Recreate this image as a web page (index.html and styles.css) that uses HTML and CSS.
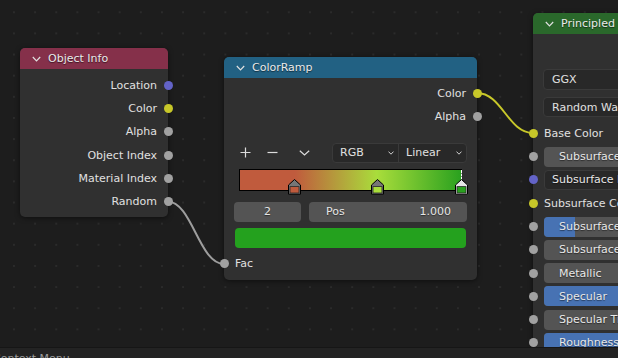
FILE: index.html
```html
<!DOCTYPE html>
<html>
<head>
<meta charset="utf-8">
<link rel="stylesheet" href="styles.css">
</head>
<body>
<div class="editor">
  <svg class="links" width="618" height="347" viewBox="0 0 618 347">
    <path d="M167.5 201.5 C192 201.5 199 264 224 264" fill="none" stroke="#9d9d9d" stroke-width="2"/>
    <path d="M477 93 C502 93 508 133 533 133" fill="none" stroke="#c8c82a" stroke-width="2"/>
  </svg>

  <div class="node obj">
    <div class="head h-red">
      <svg class="chev" width="9" height="6" viewBox="0 0 9 6"><path d="M0.8 1 L4.5 4.8 L8.2 1" fill="none" stroke="#e0e0e0" stroke-width="1.2"/></svg>
      <span>Object Info</span>
    </div>
    <div class="obj-body">
      <div class="row out"><span>Location</span><i class="sock blue"></i></div>
      <div class="row out"><span>Color</span><i class="sock yellow"></i></div>
      <div class="row out"><span>Alpha</span><i class="sock gray"></i></div>
      <div class="row out"><span>Object Index</span><i class="sock gray"></i></div>
      <div class="row out"><span>Material Index</span><i class="sock gray"></i></div>
      <div class="row out"><span>Random</span><i class="sock gray"></i></div>
    </div>
  </div>

  <div class="node ramp">
    <div class="head h-blue">
      <svg class="chev" width="9" height="6" viewBox="0 0 9 6"><path d="M0.8 1 L4.5 4.8 L8.2 1" fill="none" stroke="#e0e0e0" stroke-width="1.2"/></svg>
      <span>ColorRamp</span>
    </div>
    <div class="ramp-body">
      <div class="row out"><span>Color</span><i class="sock yellow"></i></div>
      <div class="row out"><span>Alpha</span><i class="sock gray"></i></div>
      <div class="tools">
        <div class="tbtn"><svg width="11" height="11" viewBox="0 0 11 11"><path d="M5.5 0.5 V10.5 M0.5 5.5 H10.5" stroke="#dcdcdc" stroke-width="1.2"/></svg></div>
        <div class="tbtn t2"><svg width="11" height="11" viewBox="0 0 11 11"><path d="M0.5 5.5 H10.5" stroke="#dcdcdc" stroke-width="1.2"/></svg></div>
        <div class="tbtn t3"><svg width="11" height="6" viewBox="0 0 11 6"><path d="M0.8 0.8 L5.5 5 L10.2 0.8" fill="none" stroke="#dcdcdc" stroke-width="1.2"/></svg></div>
        <div class="dd">
          <div class="dd-seg s1"><span>RGB</span><svg width="6" height="4" viewBox="0 0 6 4"><path d="M0.5 0.6 L3 3.2 L5.5 0.6" fill="none" stroke="#d0d0d0" stroke-width="1"/></svg></div>
          <div class="dd-seg s2"><span>Linear</span><svg width="6" height="4" viewBox="0 0 6 4"><path d="M0.5 0.6 L3 3.2 L5.5 0.6" fill="none" stroke="#d0d0d0" stroke-width="1"/></svg></div>
        </div>
      </div>
      <div class="bar">
        <div class="grad"></div>
        <div class="active-line"></div>
        <svg class="mk m1" width="13" height="16" viewBox="0 0 13 16"><path d="M6.5 0.5 L12.5 6 V15.2 H0.5 V6 Z" fill="#767676" stroke="#000"/><rect x="2" y="7.6" width="9" height="6.4" fill="#c05b3d" stroke="#2a2a2a" stroke-width="0.8"/></svg>
        <svg class="mk m2" width="13" height="16" viewBox="0 0 13 16"><path d="M6.5 0.5 L12.5 6 V15.2 H0.5 V6 Z" fill="#767676" stroke="#000"/><rect x="2" y="7.6" width="9" height="6.4" fill="#a9dd3b" stroke="#2a2a2a" stroke-width="0.8"/></svg>
        <svg class="mk m3" width="13" height="16" viewBox="0 0 13 16"><path d="M6.5 0.5 L12.5 6 V15.2 H0.5 V6 Z" fill="#e6e6e6" stroke="#000"/><rect x="2" y="7.6" width="9" height="6.4" fill="#2aa11f" stroke="#2a2a2a" stroke-width="0.8"/></svg>
      </div>
      <div class="fields">
        <div class="num n1"><span>2</span></div>
        <div class="num n2"><span>Pos</span><span>1.000</span></div>
      </div>
      <div class="swatch"></div>
      <div class="row in fac"><i class="sock gray"></i><span>Fac</span></div>
    </div>
  </div>

  <div class="node bsdf">
    <div class="head h-green">
      <svg class="chev" width="9" height="6" viewBox="0 0 9 6"><path d="M0.8 1 L4.5 4.8 L8.2 1" fill="none" stroke="#e0e0e0" stroke-width="1.2"/></svg>
      <span>Principled BSDF</span>
    </div>
    <div class="bsdf-body">
      <div class="dd-full first"><span>GGX</span></div>
      <div class="dd-full second"><span>Random Walk</span></div>
      <div class="row in first-row"><i class="sock yellow"></i><span>Base Color</span></div>
      <div class="row in"><i class="sock gray"></i><div class="slider"><span>Subsurface</span></div></div>
      <div class="row in"><i class="sock blue"></i><div class="vec"><span>Subsurface Radius</span></div></div>
      <div class="row in"><i class="sock yellow"></i><span>Subsurface Color</span></div>
      <div class="row in"><i class="sock gray"></i><div class="slider"><b class="fill" style="width:14%"></b><span>Subsurface IOR</span></div></div>
      <div class="row in"><i class="sock gray"></i><div class="slider"><span>Subsurface Anisotropy</span></div></div>
      <div class="row in"><i class="sock gray"></i><div class="slider"><span>Metallic</span></div></div>
      <div class="row in"><i class="sock gray"></i><div class="slider"><b class="fill" style="width:50%"></b><span>Specular</span></div></div>
      <div class="row in"><i class="sock gray"></i><div class="slider"><span>Specular Tint</span></div></div>
      <div class="row in"><i class="sock gray"></i><div class="slider"><b class="fill" style="width:50%"></b><span>Roughness</span></div></div>
    </div>
  </div>
</div>
<div class="status"><span>Context Menu</span></div>
</body>
</html>
```

FILE: styles.css
```css
* { box-sizing: border-box; }
html, body { margin: 0; padding: 0; }
body {
  width: 618px;
  height: 358px;
  overflow: hidden;
  background: #1d1d1d;
  font-family: "DejaVu Sans", "Liberation Sans", sans-serif;
  font-size: 11px;
  color: #e0e0e0;
}
.editor {
  position: relative;
  height: 347px;
  overflow: hidden;
  background-color: #1d1d1d;
  background-image: radial-gradient(circle, #2b2b2b 0.9px, transparent 1.4px);
  background-size: 21.15px 21.15px;
  background-position: 3.4px 1.7px;
}
.status {
  height: 11px;
  border-top: 1px solid #161616;
  background: #232323;
  overflow: hidden;
  color: #9c9c9c;
  line-height: 13px;
  padding-top: 4px;
}
.status span { margin-left: -7px; }

.links { position: absolute; left: 0; top: 0; }

.node {
  position: absolute;
  background: #303030;
  border-radius: 5px;
  box-shadow: 0 1px 5px rgba(0, 0, 0, 0.5);
}
.head {
  height: 21px;
  border-radius: 5px 5px 0 0;
  display: flex;
  align-items: center;
  padding-left: 12px;
  gap: 7px;
  color: #eaeaea;
  text-shadow: 0 1px 1px rgba(0, 0, 0, 0.55);
}
.chev { flex: none; }
.h-red { background: #85304a; }
.h-blue { background: #226183; }
.h-green { background: #2a682b; }

.row {
  position: relative;
  height: 23.3px;
  display: flex;
  align-items: center;
  white-space: nowrap;
}
.row.out { justify-content: flex-end; padding-right: 11px; }
.row.in { padding-left: 11px; }
.sock {
  position: absolute;
  top: 50%;
  width: 9px;
  height: 9px;
  margin-top: -4.5px;
  border-radius: 50%;
}
.out .sock { right: -4.5px; }
.in .sock { left: -4.5px; }
.sock.gray { background: #a1a1a1; }
.sock.yellow { background: #c7c729; }
.sock.blue { background: #6363c7; }

/* Object Info */
.obj { left: 20px; top: 48px; width: 148px; height: 169px; }
.obj-body { padding-top: 4.5px; }

/* ColorRamp */
.ramp { left: 224px; top: 57px; width: 253px; height: 223px; }
.ramp-body { padding-top: 4px; }
.tools {
  display: flex;
  align-items: center;
  height: 20px;
  margin: 14.4px 10px 0 11px;
}
.tbtn {
  width: 20px;
  height: 20px;
  display: flex;
  align-items: center;
  justify-content: center;
}
.tbtn.t2 { margin-left: 7px; }
.tbtn.t3 { margin-left: 12px; }
.dd {
  margin-left: auto;
  width: 135px;
  height: 20px;
  display: flex;
  background: #282828;
  border: 1px solid #3a3a3a;
  border-radius: 4px;
}
.dd-seg {
  display: flex;
  align-items: center;
  justify-content: space-between;
  padding: 0 4px 0 7px;
}
.dd-seg.s1 { width: 66px; border-right: 1px solid #3a3a3a; }
.dd-seg.s2 { flex: 1; padding-left: 7px; padding-right: 4px; }

.bar {
  position: relative;
  height: 22px;
  margin: 6px 15px 0 15px;
}
.grad {
  height: 22px;
  border: 1px solid #000;
  background: linear-gradient(to right, #c05b3d 0%, #c05b3d 24.9%, #a9dd3b 61.9%, #2aa11f 100%);
}
.active-line {
  position: absolute;
  left: 221.5px;
  top: 1px;
  height: 10px;
  border-left: 1px dashed #ffffff;
}
.mk { position: absolute; top: 10px; }
.mk.m1 { left: 49px; }
.mk.m2 { left: 131.5px; }
.mk.m3 { left: 215.7px; }

.fields {
  display: flex;
  gap: 8px;
  height: 20px;
  margin: 11px 10px 0 10px;
}
.num {
  height: 20px;
  background: #545454;
  border-radius: 4px;
  display: flex;
  align-items: center;
  color: #e6e6e6;
  text-shadow: 0 1px 1px rgba(0, 0, 0, 0.45);
}
.num.n1 { width: 67px; justify-content: center; }
.num.n2 { flex: 1; justify-content: space-between; padding: 0 16px 0 17px; }
.swatch {
  height: 20px;
  margin: 6px 11px 0 11px;
  background: #24a11e;
  border-radius: 4px;
}
.row.fac { margin-top: 4.35px; }

/* Principled */
.bsdf { left: 533px; top: 13px; width: 240px; height: 360px; }
.bsdf-body { padding-top: 35.3px; }
.dd-full {
  margin: 0 10px 0 10px;
  background: #282828;
  border: 1px solid #3a3a3a;
  border-radius: 4px;
  display: flex;
  align-items: center;
  padding-left: 8px;
  white-space: nowrap;
}
.dd-full.first { height: 20.7px; }
.dd-full.second { height: 20px; margin-top: 7.3px; }
.row.first-row { margin-top: 4.4px; }
.slider, .vec {
  position: relative;
  flex: 1;
  height: 20px;
  margin-right: 10px;
  border-radius: 4px;
  display: flex;
  align-items: center;
  overflow: hidden;
  white-space: nowrap;
  color: #e8e8e8;
  text-shadow: 0 1px 1px rgba(0, 0, 0, 0.5);
}
.slider { background: #545454; padding-left: 15px; }
.vec { background: #282828; border: 1px solid #3a3a3a; padding-left: 7px; }
.fill {
  position: absolute;
  left: 0;
  top: 0;
  bottom: 0;
  background: #4772b3;
}
.slider span { position: relative; }
```
